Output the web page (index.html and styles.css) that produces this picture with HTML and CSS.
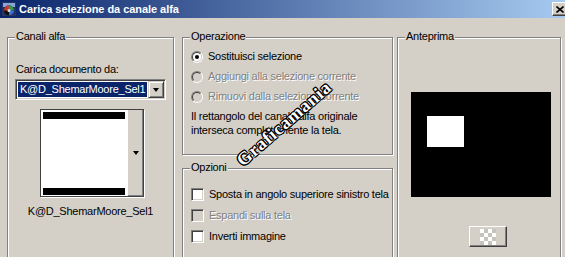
FILE: index.html
```html
<!DOCTYPE html>
<html lang="it">
<head>
  <meta charset="UTF-8">
  <title>Carica selezione da canale alfa</title>
  <link rel="stylesheet" href="styles.css">
</head>
<body>
  <div class="dialog">
    <div class="titlebar">
      <svg class="title-icon" width="16" height="16" viewBox="0 0 16 16">
        <rect x="1" y="1" width="14" height="14" fill="#27345e"/>
        <rect x="2" y="2" width="12" height="4" fill="#86a6d8"/>
        <circle cx="8" cy="9.5" r="5" fill="#111"/>
        <path d="M8 9.5 L8 4.5 A5 5 0 0 1 13 9.5 Z" fill="#2f9e4a"/>
        <path d="M8 9.5 L13 9.5 A5 5 0 0 1 8 14.5 Z" fill="#3a6fd8"/>
        <path d="M8 9.5 L3 9.5 A5 5 0 0 1 8 4.5 Z" fill="#c83a3a"/>
        <circle cx="8" cy="9.5" r="1.5" fill="#ddd"/>
      </svg>
      <span class="title-text">Carica selezione da canale alfa</span>
      <div class="close-btn">
        <svg width="8" height="7" viewBox="0 0 8 7">
          <path d="M0.5 0.5 L7.5 6.5 M7.5 0.5 L0.5 6.5" stroke="#000" stroke-width="1.6"/>
        </svg>
      </div>
    </div>

    <div class="content">
      <div class="group group-channels">
        <div class="group-title">Canali alfa</div>
        <div class="field-label">Carica documento da:</div>
        <div class="combo">
          <span class="combo-value">K@D_ShemarMoore_Sel1</span>
          <span class="combo-btn"><span class="arrow"></span></span>
        </div>
        <div class="thumb">
          <div class="thumb-image">
            <div class="thumb-bar"></div>
            <div class="thumb-bar"></div>
          </div>
          <div class="thumb-scroll"><span class="arrow"></span></div>
        </div>
        <div class="thumb-caption">K@D_ShemarMoore_Sel1</div>
      </div>

      <div class="column">
        <div class="group group-operation">
          <div class="group-title">Operazione</div>
          <div class="choices">
            <div class="choice">
              <span class="radio"><span class="radio-inner"><span class="radio-dot"></span></span></span>
              <span>Sostituisci selezione</span>
            </div>
            <div class="choice disabled">
              <span class="radio"><span class="radio-inner"></span></span>
              <span>Aggiungi alla selezione corrente</span>
            </div>
            <div class="choice disabled">
              <span class="radio"><span class="radio-inner"></span></span>
              <span>Rimuovi dalla selezione corrente</span>
            </div>
          </div>
          <p class="note">Il rettangolo del canale alfa originale<br>interseca completamente la tela.</p>
        </div>

        <div class="group group-options">
          <div class="group-title">Opzioni</div>
          <div class="checks">
            <div class="choice">
              <span class="checkbox"></span>
              <span>Sposta in angolo superiore sinistro tela</span>
            </div>
            <div class="choice disabled">
              <span class="checkbox"></span>
              <span>Espandi sulla tela</span>
            </div>
            <div class="choice">
              <span class="checkbox"></span>
              <span>Inverti immagine</span>
            </div>
          </div>
        </div>
      </div>

      <div class="group group-preview">
        <div class="group-title">Anteprima</div>
        <div class="preview">
          <div class="preview-shape"></div>
        </div>
        <div class="preview-btn">
          <svg width="16" height="16" viewBox="0 0 16 16">
            <rect width="16" height="16" fill="#c6c3bc"/>
            <rect x="0" y="0" width="4" height="4" fill="#fff"/>
            <rect x="8" y="0" width="4" height="4" fill="#fff"/>
            <rect x="4" y="4" width="4" height="4" fill="#fff"/>
            <rect x="12" y="4" width="4" height="4" fill="#fff"/>
            <rect x="0" y="8" width="4" height="4" fill="#fff"/>
            <rect x="8" y="8" width="4" height="4" fill="#fff"/>
            <rect x="4" y="12" width="4" height="4" fill="#fff"/>
            <rect x="12" y="12" width="4" height="4" fill="#fff"/>
          </svg>
        </div>
      </div>
    </div>

    <div class="watermark">Graficamania</div>
  </div>
</body>
</html>
```

FILE: styles.css
```css
body {
  margin: 0;
  background: #d4d0c8;
  color: #000;
  font-family: "Liberation Sans", Arial, sans-serif;
  font-size: 11px;
  letter-spacing: -0.25px;
  overflow: hidden;
}

.dialog {
  position: relative;
  width: 565px;
  height: 257px;
  overflow: hidden;
}

/* title bar */
.titlebar {
  height: 18px;
  display: flex;
  align-items: center;
  padding-left: 1px;
  background: linear-gradient(to right, #0a246a, #a6caf0);
}

.title-icon {
  flex: none;
  margin-right: 2px;
}

.title-text {
  color: #fff;
  font-weight: bold;
  letter-spacing: -0.05px;
  line-height: 13px;
}

.close-btn {
  margin-left: auto;
  margin-right: -3px;
  width: 16px;
  height: 14px;
  box-sizing: border-box;
  display: flex;
  align-items: center;
  justify-content: center;
  background: #d4d0c8;
  border: 1px solid;
  border-color: #fff #404040 #404040 #fff;
  box-shadow: inset -1px -1px 0 #808080;
}

/* layout */
.content {
  display: flex;
  align-items: flex-start;
  padding: 19px 0 0 7px;
}

.column {
  width: 211px;
  margin-right: 4px;
}

.group {
  box-sizing: border-box;
  display: flex;
  flex-direction: column;
  align-items: flex-start;
  padding: 0 8px;
  border: 1px solid #808080;
  box-shadow: inset 1px 1px 0 #fff, 1px 1px 0 #fff;
}

.group-title {
  margin: -8px 0 0 -1px;
  padding: 0 1px;
  background: #d4d0c8;
  line-height: 13px;
}

.group-channels {
  width: 167px;
  height: 240px;
  margin-right: 8px;
}

.group-operation {
  height: 118px;
}

.group-options {
  height: 100px;
  margin-top: 13px;
}

.group-preview {
  width: 164px;
  height: 240px;
}

/* channels */
.field-label {
  margin-top: 20px;
  line-height: 13px;
}

.combo {
  margin: 3px 0 0 -1px;
  width: 151px;
  height: 21px;
  box-sizing: border-box;
  display: flex;
  padding: 1px;
  background: #fff;
  border: 1px solid;
  border-color: #808080 #fff #fff #808080;
  box-shadow: inset 1px 1px 0 #404040, inset -1px -1px 0 #d4d0c8;
}

.combo-value {
  flex: 1;
  margin: 1px;
  padding-left: 2px;
  background: #0a246a;
  color: #fff;
  line-height: 15px;
}

.combo-btn {
  width: 16px;
  box-sizing: border-box;
  display: flex;
  align-items: center;
  justify-content: center;
  background: #d4d0c8;
  border: 1px solid;
  border-color: #d4d0c8 #404040 #404040 #d4d0c8;
  box-shadow: inset 1px 1px 0 #fff, inset -1px -1px 0 #808080;
}

.arrow {
  width: 0;
  height: 0;
  border-left: 3.5px solid transparent;
  border-right: 3.5px solid transparent;
  border-top: 4px solid #000;
}

.thumb {
  margin: 9px 0 0 24px;
  width: 104px;
  height: 88px;
  box-sizing: border-box;
  display: flex;
  border: 1px solid #404040;
  box-shadow: 1px 1px 0 #fff;
}

.thumb-image {
  width: 86px;
  box-sizing: border-box;
  padding: 2px 2px 1px 2px;
  display: flex;
  flex-direction: column;
  justify-content: space-between;
  background: #fff;
}

.thumb-bar {
  height: 7px;
  background: #000;
}

.thumb-scroll {
  flex: 1;
  display: flex;
  align-items: center;
  justify-content: center;
  background: #d4d0c8;
  border-left: 1px solid #fff;
  box-shadow: inset -1px -1px 0 #808080;
}

.thumb-caption {
  align-self: stretch;
  margin-top: 8px;
  line-height: 13px;
  text-align: center;
}

/* radios and checkboxes */
.choices {
  margin-top: 7px;
  display: flex;
  flex-direction: column;
  gap: 7px;
}

.checks {
  margin-top: 14px;
  display: flex;
  flex-direction: column;
  gap: 8px;
}

.choice {
  display: flex;
  align-items: center;
  gap: 5px;
  height: 13px;
  line-height: 13px;
  white-space: nowrap;
}

.choice.disabled {
  color: #808080;
  text-shadow: 1px 1px 0 #fff;
}

.radio {
  width: 12px;
  height: 12px;
  box-sizing: border-box;
  display: flex;
  border-radius: 50%;
  border: 1px solid;
  border-color: #808080 #fff #fff #808080;
}

.radio-inner {
  flex: 1;
  display: flex;
  align-items: center;
  justify-content: center;
  border-radius: 50%;
  border: 1px solid;
  border-color: #404040 #d4d0c8 #d4d0c8 #404040;
  background: #fff;
}

.disabled .radio-inner {
  background: #d4d0c8;
}

.radio-dot {
  width: 4px;
  height: 4px;
  border-radius: 50%;
  background: #000;
}

.checkbox {
  width: 13px;
  height: 13px;
  box-sizing: border-box;
  background: #fff;
  border: 1px solid;
  border-color: #808080 #fff #fff #808080;
  box-shadow: inset 1px 1px 0 #404040, inset -1px -1px 0 #d4d0c8;
}

.disabled .checkbox {
  background: #d4d0c8;
}

.note {
  margin: 6px 0 0;
  line-height: 14px;
}

/* preview */
.preview {
  margin: 49px 0 0 5px;
  width: 140px;
  height: 105px;
  box-sizing: border-box;
  padding: 24px 0 0 16px;
  background: #000;
}

.preview-shape {
  width: 37px;
  height: 31px;
  background: #fff;
}

.preview-btn {
  margin: 29px 0 0 63px;
  width: 38px;
  height: 21px;
  box-sizing: border-box;
  display: flex;
  align-items: center;
  justify-content: center;
  background: #d4d0c8;
  border: 1px solid;
  border-color: #fff #404040 #404040 #fff;
  box-shadow: inset -1px -1px 0 #808080;
}

/* watermark over the dialog */
.watermark {
  position: absolute;
  left: 243px;
  top: 152px;
  font-family: "Liberation Serif", "Times New Roman", serif;
  font-size: 18px;
  font-weight: bold;
  letter-spacing: 1px;
  line-height: 18px;
  color: #fff;
  text-shadow: 1px 0 #000, -1px 0 #000, 0 1px #000, 0 -1px #000,
    1px 1px #000, -1px -1px #000, 1px -1px #000, -1px 1px #000;
  transform-origin: 0 15px;
  transform: rotate(-41deg);
  pointer-events: none;
}
```
